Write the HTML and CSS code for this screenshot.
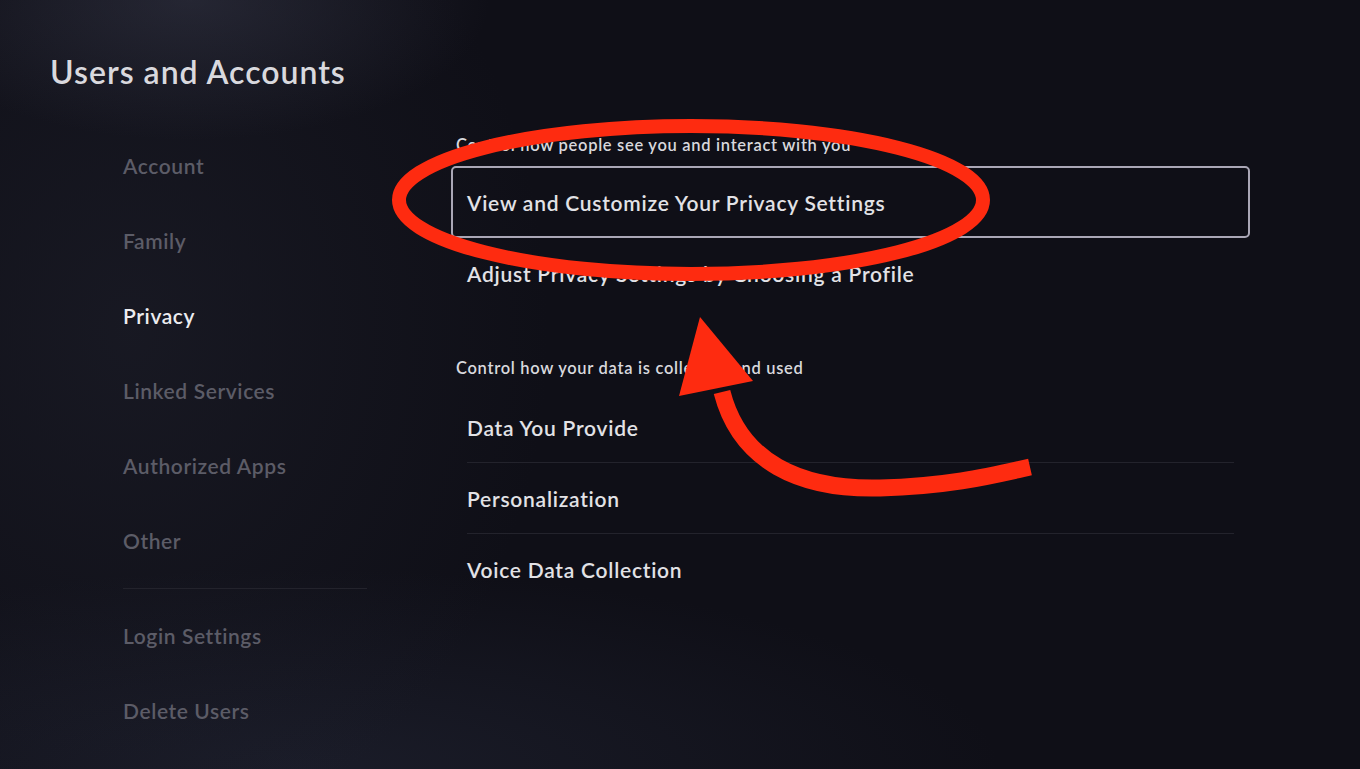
FILE: index.html
```html
<!DOCTYPE html>
<html lang="en">
<head>
<meta charset="utf-8">
<title>Users and Accounts</title>
<link rel="stylesheet" href="styles.css">
</head>
<body>
<div class="screen">
  <h1 class="title">Users and Accounts</h1>
  <div class="main">
    <nav class="sidenav">
      <div class="nav-item">Account</div>
      <div class="nav-item">Family</div>
      <div class="nav-item active">Privacy</div>
      <div class="nav-item">Linked Services</div>
      <div class="nav-item">Authorized Apps</div>
      <div class="nav-item">Other</div>
      <div class="nav-sep"></div>
      <div class="nav-item">Login Settings</div>
      <div class="nav-item">Delete Users</div>
    </nav>
    <section class="content">
      <div class="group-label first">Control how people see you and interact with you</div>
      <div class="row focused">View and Customize Your Privacy Settings</div>
      <div class="row">Adjust Privacy Settings by Choosing a Profile</div>
      <div class="group-label second">Control how your data is collected and used</div>
      <div class="row sep">Data You Provide</div>
      <div class="row sep">Personalization</div>
      <div class="row">Voice Data Collection</div>
    </section>
  </div>
  <svg class="annot" width="1360" height="769" viewBox="0 0 1360 769" aria-hidden="true">
    <ellipse cx="691" cy="200" rx="292" ry="74" fill="none" stroke="#fe2b10" stroke-width="14"/>
    <path d="M722 392 C 740 462, 800 490, 880 488 C 950 486, 990 476, 1030 467" fill="none" stroke="#fe2b10" stroke-width="17"/>
    <polygon points="700,317 679,396 753,381" fill="#fe2b10"/>
  </svg>
</div>
</body>
</html>
```
FILE: styles.css
```css
* { box-sizing: border-box; margin: 0; padding: 0; }
html, body { width: 1360px; height: 769px; overflow: hidden; }
body {
  background: #0f0f17;
  font-family: "Lato", "Noto Sans", sans-serif;
}
.screen {
  position: relative;
  width: 1360px;
  height: 769px;
  background:
    radial-gradient(ellipse 300px 140px at 190px 0px, rgba(60,62,80,0.45), rgba(60,62,80,0) 100%),
    radial-gradient(ellipse 420px 520px at 130px 330px, rgba(40,42,56,0.35), rgba(40,42,56,0) 100%),
    radial-gradient(ellipse 700px 200px at 300px 769px, rgba(40,44,62,0.45), rgba(40,44,62,0) 100%),
    #0f0f17;
}
.title {
  padding: 52px 0 0 50px;
  height: 128px;
  font-size: 32px;
  line-height: 40px;
  font-weight: 600;
  color: #d9d9de;
  letter-spacing: 1px;
}
.main {
  display: flex;
}
.sidenav {
  width: 451px;
  padding-left: 123px;
  display: flex;
  flex-direction: column;
}
.nav-item {
  height: 75px;
  line-height: 75px;
  font-size: 21px;
  font-weight: 600;
  color: #5c5c67;
  letter-spacing: 0.6px;
}
.nav-item.active { color: #ececf0; }
.nav-sep {
  width: 244px;
  height: 1px;
  background: #23232c;
  margin: 10px 0 9px;
}
.content {
  width: 799px;
  display: flex;
  flex-direction: column;
}
.group-label {
  font-size: 16.5px;
  line-height: 20px;
  font-weight: 600;
  color: #d8d8dd;
  padding-left: 5px;
  letter-spacing: 0.7px;
}
.group-label.first { margin-top: 7px; margin-bottom: 11px; }
.group-label.second { margin-top: 49px; margin-bottom: 14px; }
.row {
  position: relative;
  height: 71px;
  display: flex;
  align-items: center;
  padding-left: 16px;
  font-size: 21px;
  font-weight: 600;
  color: #e2e2e6;
  letter-spacing: 0.75px;
}
.row.focused {
  height: 72px;
  padding-left: 14px;
  border: 2px solid #aaa7b6;
  border-radius: 5px;
}
.row.sep::after {
  content: "";
  position: absolute;
  left: 16px;
  right: 16px;
  bottom: 0;
  height: 1px;
  background: #23232c;
}
.annot {
  position: absolute;
  left: 0;
  top: 0;
  pointer-events: none;
}
```
